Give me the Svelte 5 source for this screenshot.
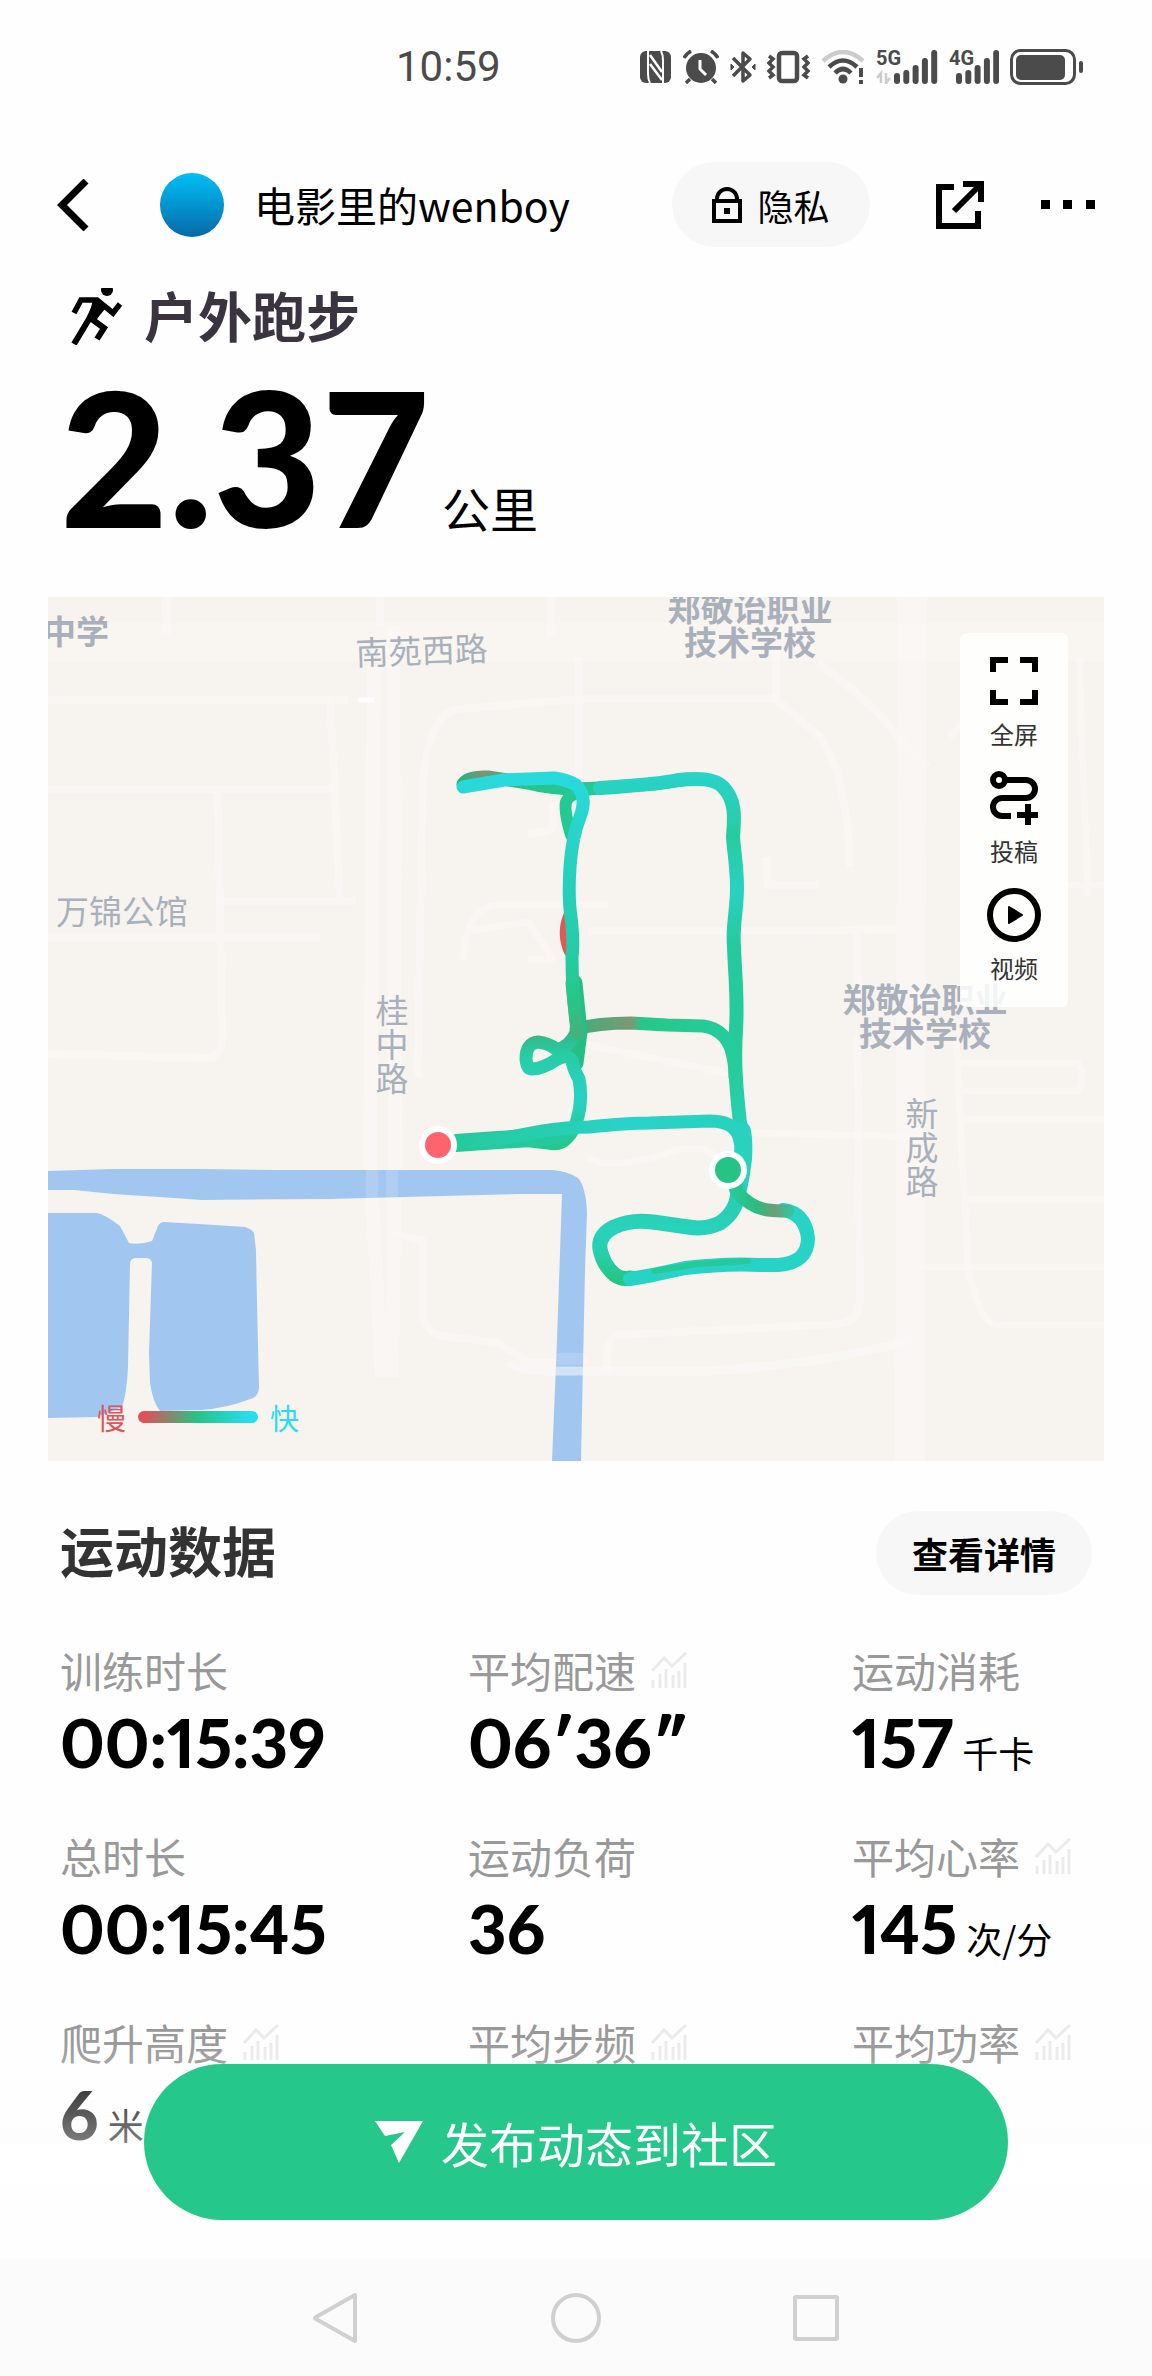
<script>
  const user = { name: '电影里的wenboy' };

  const sport = { title: '户外跑步', distance: '2.37', unit: '公里' };

  const metrics = [
    { label: '训练时长', value: '00:15:39' },
    { label: '平均配速', value: '06′36″', trend: true },
    { label: '运动消耗', value: '157', unit: '千卡' },
    { label: '总时长', value: '00:15:45' },
    { label: '运动负荷', value: '36' },
    { label: '平均心率', value: '145', unit: '次/分', trend: true },
    { label: '爬升高度', value: '6', unit: '米', trend: true },
    { label: '平均步频', trend: true },
    { label: '平均功率', trend: true }
  ];

  // signal bar tops, left to right
  const signalBars = [23, 20, 15, 8, 0];

  const roads = [
    { d: 'M0 103H300M0 192H285M0 340H272M170 192L174 440Q174 460 160 461L0 457', w: 8 },
    { d: 'M282 100L292 304M168 304H308', w: 8 },
    { d: 'M118 0V38M332 0V30M503 0V40', w: 9 },
    { d: 'M326 70L322 560L334 780M345 30L347 560L344 780', w: 14 },
    { d: 'M370 480L374 200Q378 116 410 112L530 102H728L772 140Q800 180 802 270', w: 8 },
    { d: 'M531 60V186M505 205V230Q505 236 480 236', w: 8 },
    { d: 'M415 362Q418 310 450 308L560 308M418 334L480 325L505 362H480', w: 7 },
    { d: 'M728 50V104M770 66Q830 110 850 140L880 170M902 140L960 80', w: 8 },
    { d: 'M718 260L720 288H770M540 334H760L850 332M810 332V400', w: 8 },
    { d: 'M864 0L862 864', w: 30 },
    { d: 'M530 446Q600 460 680 476M540 560Q560 575 620 556Q650 545 670 560M700 536L880 540', w: 7 },
    { d: 'M810 440L812 700Q812 724 790 727L570 738Q556 742 560 775', w: 8 },
    { d: 'M1056 522H910M910 466H1030Q1040 480 1030 494H910M908 440L920 670Q932 728 950 728H1056', w: 7 },
    { d: 'M920 602H1056M870 670H1056M1010 288H1056M1032 60V90L1040 300', w: 7 },
    { d: 'M345 636L375 644V720Q380 738 400 740L450 746L480 765Q500 766 540 764', w: 8 }
  ];

  const route = [
    { d: 'M415 187Q420 179 440 180L480 186Q510 194 552 191L606 187L640 182', stroke: 'url(#legBrown)', w: 13 },
    { d: 'M523 238Q516 214 518 205Q522 194 552 191', stroke: '#24c994', w: 12 },
    { d: 'M520 319Q513 337 521 355', stroke: '#df5a57', w: 10 },
    { d: 'M552 191C576 189 606 188 630 183C650 181 666 181 675 190C689 204 686 224 685 240C686 255 689 270 689 290C689 315 684 330 686 350C687 380 690 400 688 433C686 465 688 490 692 526C695 538 698 548 697 562', stroke: 'url(#legRight)', w: 14 },
    { d: 'M528 432Q550 426 583 426L619 428L655 429Q676 432 683 452Q687 465 687 480', stroke: 'url(#legMid)', w: 13 },
    { d: 'M526 386L531 435L527 466', stroke: '#25bf85', w: 17 },
    { d: 'M528 436Q520 452 508 452Q500 446 490 445Q478 446 478 462Q479 472 484 472Q494 472 508 463Q520 456 524 464Q526 474 531 482Q535 503 529 523Q526 534 519 541Q512 549 500 546L456 541', stroke: 'url(#legLoop)', w: 13 },
    { d: 'M408 546L450 543L498 540L516 536', stroke: '#24ca9c', w: 18 },
    { d: 'M408 545L446 543L495 534Q520 530 541 530Q580 526 601 526L662 524Q690 524 692 545', stroke: 'url(#legLow)', w: 13 },
    { d: 'M415 190L456 183L506 181Q520 183 528 188Q540 200 532 220Q524 240 522 270Q520 300 523 320Q526 345 524 360Q524 400 530 436', stroke: 'url(#legLeft)', w: 13 },
    { d: 'M694 534Q698 556 690 592', stroke: '#28d2bf', w: 18 },
    { d: 'M690 592Q690 614 672 626Q657 633 640 630L605 625Q583 622 566 630Q550 638 552 652Q555 668 567 678Q574 683 582 681', stroke: 'url(#legBase)', w: 15 },
    { d: 'M582 682L605 678L637 671Q680 666 712 668H730Q760 666 760 641Q757 616 735 613', stroke: '#27d3c5', w: 14 },
    { d: 'M606 674L650 667L700 664', stroke: '#25c99a', w: 6 },
    { d: 'M740 614Q722 614 715 612Q702 609 690 596L684 582', stroke: 'url(#legBack)', w: 13 }
  ];

  const places = [
    { x: 28, y: 47, lines: ['中学'], bold: true },
    { x: 374, y: 66, lines: ['南苑西路'], tilt: -2 },
    { x: 702, y: 24, lines: ['郑敬诒职业', '技术学校'], bold: true },
    { x: 877, y: 415, lines: ['郑敬诒职业', '技术学校'], bold: true },
    { x: 74, y: 327, lines: ['万锦公馆'] },
    { x: 344, y: 426, lines: ['桂', '中', '路'] },
    { x: 874, y: 529, lines: ['新', '成', '路'] }
  ];
</script>

<div class="screen">
  <div class="status-bar">
    <span class="clock">10:59</span>
    <div class="status-icons">
      <svg width="32" height="34" viewBox="0 0 32 34">
        <rect y="1" width="31" height="32" rx="6" fill="#4b4b4b" />
        <path d="M8 1V24Q8 29 10 33M23 33V10Q23 5 21 1" fill="none" stroke="#fff" stroke-width="2" />
        <path d="M10 5L22 22M10 14L22 30" stroke="#fff" stroke-width="2.5" />
      </svg>
      <svg width="36" height="34" viewBox="0 0 36 34" fill="none" stroke="#4b4b4b" stroke-width="3.5">
        <circle cx="18" cy="18" r="15" fill="#4b4b4b" stroke="none" />
        <path d="M1 8Q3 4 8 1M35 8Q33 4 28 1M7 29L3 33M29 29L33 33" />
        <path d="M17 10V19L23 25" stroke="#fff" stroke-width="3" />
      </svg>
      <svg width="26" height="34" viewBox="0 0 26 34" fill="none" stroke="#4b4b4b" stroke-width="3.5">
        <path d="M3 8L20 25L13 31V3L20 9L3 26" stroke-linejoin="round" />
        <path d="M1 14L4 17L1 20ZM25 14L22 17L25 20Z" fill="#4b4b4b" stroke-width="1" />
      </svg>
      <svg width="43" height="34" viewBox="0 0 43 34" fill="none" stroke="#4b4b4b" stroke-width="4.5">
        <rect x="12" y="3" width="18" height="28" rx="3" />
        <path d="M2 6L6 9L2 13L6 17L2 21L6 25L2 28M41 6L37 9L41 13L37 17L41 21L37 25L41 28" stroke-width="3.5" />
      </svg>
      <svg width="44" height="34" viewBox="0 0 44 34" fill="none" stroke="#4b4b4b" stroke-width="4.5">
        <path d="M2 11Q22 -7 42 11" stroke="#ccc" />
        <path d="M8 17Q22 4 36 17M14 23Q22 15 30 23" />
        <circle cx="22" cy="29" r="4.5" fill="#4b4b4b" stroke="none" />
        <path d="M40 18V27M40 30V34" stroke-width="4" />
      </svg>
      <div class="signal">
        <span class="network">5G</span>
        <svg width="62" height="34" viewBox="0 0 62 34">
          <path d="M1 28L5 23V33M14 28L10 33V23" fill="none" stroke="#ccc" stroke-width="2.5" />
          {#each signalBars as top, i}
            <rect x={18 + i * 9.3} y={top} width="6" height={34 - top} rx="3" fill="#4b4b4b" />
          {/each}
        </svg>
      </div>
      <div class="signal">
        <span class="network">4G</span>
        <svg width="50" height="34" viewBox="0 0 50 34">
          {#each signalBars as top, i}
            <rect x={7 + i * 9.3} y={top} width="6" height={34 - top} rx="3" fill="#4b4b4b" />
          {/each}
        </svg>
      </div>
      <svg width="74" height="36" viewBox="0 0 74 36">
        <rect x="1.5" y="1.5" width="63" height="33" rx="9" fill="none" stroke="#4b4b4b" stroke-width="3" />
        <rect x="6" y="6" width="49" height="25" rx="5" fill="#4b4b4b" />
        <rect x="69" y="12" width="4" height="12" rx="2" fill="#4b4b4b" />
      </svg>
    </div>
  </div>

  <header class="header">
    <button class="icon-btn back" aria-label="返回">
      <svg width="32" height="52" viewBox="0 0 32 52">
        <path d="M29 2L5 26L29 50" fill="none" stroke="#000" stroke-width="7" />
      </svg>
    </button>
    <span class="avatar"></span>
    <span class="user-name">{user.name}</span>
    <button class="privacy">
      <svg width="30" height="36" viewBox="0 0 30 36" fill="none" stroke="#000" stroke-width="4">
        <path d="M5 13V12A10 10 0 0 1 25 12V13" />
        <rect x="2" y="14" width="26" height="20" />
        <rect x="12" y="21" width="6" height="6" fill="#000" stroke="none" />
      </svg>
      隐私
    </button>
    <button class="icon-btn share" aria-label="分享">
      <svg width="48" height="48" viewBox="0 0 48 48" fill="none" stroke="#000" stroke-width="6">
        <path d="M18 6H3V45H42V30" />
        <path d="M27 3H45V21M44 4L18 30" />
      </svg>
    </button>
    <button class="icon-btn more" aria-label="更多">
      <svg width="54" height="10" viewBox="0 0 54 10">
        <path d="M0 0H9V9H0ZM22 0H31V9H22ZM45 0H54V9H45Z" />
      </svg>
    </button>
  </header>

  <main>
    <section class="summary">
      <h1>
        <svg width="52" height="57" viewBox="0 0 52 57" fill="none" stroke="#000" stroke-width="5.5">
          <circle cx="36" cy="2" r="6" fill="#000" stroke="none" />
          <path d="M3 25L10 12H26L42 25L49 16" />
          <path d="M27 12L18 31L3 56M31 17L22 32L33 40L26 51" stroke-width="6" />
          <path d="M22 12H30L34 21L24 33L17 31Z" fill="#000" stroke="none" />
        </svg>
        {sport.title}
      </h1>
      <p class="distance"><strong>{sport.distance}</strong><span>{sport.unit}</span></p>
    </section>

    <section class="map">
      <svg class="map-canvas" viewBox="0 0 1056 864">
        <defs>
          <linearGradient id="legBrown" gradientUnits="userSpaceOnUse" x1="412" y1="0" x2="640" y2="0">
            <stop offset="0" stop-color="#27b47f" />
            <stop offset="0.1" stop-color="#7b9470" />
            <stop offset="0.3" stop-color="#24c48c" />
            <stop offset="0.6" stop-color="#25c894" />
            <stop offset="1" stop-color="#28d2c4" />
          </linearGradient>
          <linearGradient id="legRight" gradientUnits="userSpaceOnUse" x1="0" y1="180" x2="0" y2="560">
            <stop offset="0" stop-color="#28d3c8" />
            <stop offset="0.15" stop-color="#25cca0" />
            <stop offset="0.3" stop-color="#28d2c0" />
            <stop offset="0.45" stop-color="#24ca9c" />
            <stop offset="0.75" stop-color="#25cb98" />
            <stop offset="1" stop-color="#28d3c5" />
          </linearGradient>
          <linearGradient id="legMid" gradientUnits="userSpaceOnUse" x1="528" y1="0" x2="686" y2="0">
            <stop offset="0" stop-color="#3fae7c" />
            <stop offset="0.35" stop-color="#7a9a72" />
            <stop offset="0.42" stop-color="#25c78a" />
            <stop offset="1" stop-color="#25cd9d" />
          </linearGradient>
          <linearGradient id="legLoop" gradientUnits="userSpaceOnUse" x1="0" y1="436" x2="0" y2="546">
            <stop offset="0" stop-color="#35b682" />
            <stop offset="0.2" stop-color="#27cda6" />
            <stop offset="0.6" stop-color="#28d2c3" />
            <stop offset="1" stop-color="#24c88f" />
          </linearGradient>
          <linearGradient id="legLow" gradientUnits="userSpaceOnUse" x1="408" y1="0" x2="692" y2="0">
            <stop offset="0" stop-color="#24cb9f" />
            <stop offset="0.4" stop-color="#27cfb4" />
            <stop offset="0.6" stop-color="#28d4ca" />
            <stop offset="1" stop-color="#27d1bd" />
          </linearGradient>
          <linearGradient id="legLeft" gradientUnits="userSpaceOnUse" x1="0" y1="180" x2="0" y2="436">
            <stop offset="0" stop-color="#28dadc" />
            <stop offset="0.3" stop-color="#28d2c4" />
            <stop offset="0.65" stop-color="#25ccaa" />
            <stop offset="0.85" stop-color="#24c889" />
            <stop offset="1" stop-color="#42b37c" />
          </linearGradient>
          <linearGradient id="legBase" gradientUnits="userSpaceOnUse" x1="0" y1="590" x2="0" y2="682">
            <stop offset="0" stop-color="#26ceaa" />
            <stop offset="0.45" stop-color="#28d2bb" />
            <stop offset="0.7" stop-color="#27cfb0" />
            <stop offset="1" stop-color="#24c785" />
          </linearGradient>
          <linearGradient id="legBack" gradientUnits="userSpaceOnUse" x1="684" y1="0" x2="748" y2="0">
            <stop offset="0" stop-color="#25cb9a" />
            <stop offset="0.4" stop-color="#2dbb80" />
            <stop offset="0.65" stop-color="#6b9e74" />
            <stop offset="1" stop-color="#27cdab" />
          </linearGradient>
        </defs>

        <rect width="1056" height="864" fill="#f7f4ef" />
        <rect y="26" width="1056" height="38" fill="#f9f6f2" />

        <g fill="none" stroke="#faf7f4" stroke-opacity="0.75" stroke-linejoin="round">
          {#each roads as road}
            <path d={road.d} stroke-width={road.w} />
          {/each}
        </g>
        <path d="M310 103H326" stroke="#fff" stroke-width="5" />

        <g fill="#a1c7f0">
          <path d="M0 574L65 572H153L230 573L505 573Q519 574 530 581Q538 590 539 616L537 673L533 864H504L509 743L514 597H474L281 602L154 603L126 601L65 597L26 593H0Z" />
          <path d="M0 616H49Q58 618 72 629L81 646Q92 648 104 644L110 629Q112 625 116 625L167 628L197 630Q204 632 206 636L208 653L209 706L211 790Q211 798 205 801Q180 811 153 813L112 814Q105 806 102 786L101 756L104 665Q102 661 98 661H87Q82 662 82 667L80 770Q79 795 74 810L49 820L0 821Z" />
        </g>
        <path d="M324 573V602M344 573V602M508 762H536" fill="none" stroke="#fcf9f9" stroke-opacity="0.15" stroke-width="12" />
        <path d="M462 765Q470 774 500 774H660Q770 768 865 743" fill="none" stroke="#fcf9f9" stroke-opacity="0.55" stroke-width="9" />

        <g class="places">
          {#each places as place}
            <text class:bold={place.bold} y={place.y} transform={place.tilt ? `rotate(${place.tilt} ${place.x} ${place.y})` : null}>
              {#each place.lines as line, i}
                <tspan x={place.x} dy={i ? 34 : 0}>{line}</tspan>
              {/each}
            </text>
          {/each}
        </g>

        <g fill="none" stroke-linecap="round" stroke-linejoin="round">
          {#each route as leg}
            <path d={leg.d} stroke={leg.stroke} stroke-width={leg.w} />
          {/each}
        </g>

        <circle cx="390" cy="548" r="19" fill="#fff" />
        <circle cx="390" cy="548" r="13" fill="#ff636e" />
        <circle cx="680" cy="573" r="19" fill="#fff" />
        <circle cx="680" cy="573" r="13" fill="#25c486" />
      </svg>

      <div class="map-tools">
        <button>
          <svg width="54" height="54" viewBox="0 0 54 54" fill="none" stroke="#000" stroke-width="6">
            <path d="M6 18V6H21M33 6H48V18M6 36V48H21M33 48H48V36" />
          </svg>
          全屏
        </button>
        <button>
          <svg width="54" height="54" viewBox="0 0 54 54" fill="none" stroke="#000" stroke-width="6">
            <circle cx="12" cy="9" r="6" />
            <path d="M18 9H39A9 9 0 0 1 39 27H15A9 9 0 0 0 15 45H24" />
            <path d="M30 44H51M41 33V54" />
          </svg>
          投稿
        </button>
        <button>
          <svg width="54" height="54" viewBox="0 0 54 54">
            <circle cx="27" cy="27" r="24" fill="none" stroke="#000" stroke-width="6" />
            <path d="M22 19L35 27L22 35Z" stroke="#000" stroke-width="2" stroke-linejoin="round" />
          </svg>
          视频
        </button>
      </div>

      <div class="legend">
        <span class="slow">慢</span>
        <span class="scale"></span>
        <span class="fast">快</span>
      </div>
    </section>

    <section class="data">
      <div class="data-head">
        <h2>运动数据</h2>
        <button class="detail">查看详情</button>
      </div>
      <dl class="metrics">
        {#each metrics as metric}
          <div class="metric">
            <dt>
              {metric.label}
              {#if metric.trend}
                <svg width="36" height="36" viewBox="0 0 36 36" fill="none" stroke="#ebebeb" stroke-width="3">
                  <path d="M1 19L13 6L21 14L35 1" />
                  <path d="M2 28V36M9 22V36M15 17V36M22 23V36M28 19V36M34 11V36" />
                </svg>
              {/if}
            </dt>
            <dd>
              {#if metric.value}<strong>{metric.value}</strong>{/if}
              {#if metric.unit}<span>{metric.unit}</span>{/if}
            </dd>
          </div>
        {/each}
      </dl>
    </section>
  </main>

  <footer class="bottom">
    <div class="publish-area">
      <button class="publish">
        <svg width="48" height="44" viewBox="0 0 48 44">
          <path d="M0 1H48L24 43L16 25L30 12L10 16Z" fill="#fff" />
        </svg>
        发布动态到社区
      </button>
    </div>
    <nav class="system-nav">
      <button class="icon-btn" aria-label="后退">
        <svg width="50" height="52" viewBox="0 0 50 52" fill="none" stroke="#d0d0d0" stroke-width="4" stroke-linejoin="round">
          <path d="M44 3V49L5 27Q3 26 5 25Z" />
        </svg>
      </button>
      <button class="icon-btn" aria-label="主页">
        <svg width="50" height="52" viewBox="0 0 50 52" fill="none" stroke="#d0d0d0" stroke-width="4">
          <circle cx="25" cy="26" r="23" />
        </svg>
      </button>
      <button class="icon-btn" aria-label="最近任务">
        <svg width="50" height="52" viewBox="0 0 50 52" fill="none" stroke="#d0d0d0" stroke-width="4">
          <rect x="4" y="5" width="42" height="42" rx="1" />
        </svg>
      </button>
    </nav>
  </footer>
</div>

<style>
  :global(body) {
    background: #fefefe;
  }

  .screen {
    font-family: 'Noto Sans CJK SC', sans-serif;
    color: #000;
  }

  svg {
    display: block;
    flex: none;
  }

  button {
    padding: 0;
    border: 0;
    background: none;
    font: inherit;
    color: inherit;
    cursor: pointer;
  }

  h1,
  h2,
  p,
  dl,
  dd {
    margin: 0;
  }

  .status-bar {
    display: flex;
    align-items: center;
    justify-content: space-between;
    height: 134px;
    padding: 0 68px 0 396px;
  }

  .clock {
    font-family: Roboto, sans-serif;
    font-size: 42px;
    line-height: 48px;
    color: #4b4b4b;
  }

  .status-icons {
    display: flex;
    align-items: center;
    gap: 11px;
  }

  .signal {
    position: relative;
  }

  .network {
    position: absolute;
    top: -3px;
    left: 0;
    font-family: Roboto, sans-serif;
    font-size: 20px;
    font-weight: 700;
    line-height: 22px;
    color: #4b4b4b;
  }

  .header {
    display: flex;
    align-items: center;
    height: 85px;
    padding: 28px 57px 41px;
  }

  .avatar {
    width: 64px;
    height: 64px;
    margin-left: 71px;
    border-radius: 50%;
    background: linear-gradient(#00c0f5, #0569a8);
  }

  .user-name {
    flex: 1;
    margin-left: 30px;
    padding-bottom: 2px;
    font-size: 41px;
    line-height: 60px;
  }

  .privacy {
    display: flex;
    align-items: center;
    justify-content: center;
    gap: 15px;
    width: 198px;
    height: 85px;
    border-radius: 43px;
    background: #f7f7f7;
    font-size: 36px;
  }

  .share {
    margin-left: 66px;
  }

  .more {
    margin-left: 57px;
  }

  .summary {
    padding: 0 60px;
  }

  h1 {
    display: flex;
    align-items: flex-start;
    gap: 21px;
    padding-left: 11px;
    font-size: 54px;
    font-weight: 700;
    line-height: 54px;
    color: #3a3340;
  }

  .distance {
    display: flex;
    align-items: baseline;
    gap: 12px;
    height: 252px;
    line-height: 222px;
  }

  .distance strong {
    font-family: Lato, sans-serif;
    font-size: 187px;
    font-weight: 900;
  }

  .distance span {
    font-size: 48px;
  }

  .map {
    position: relative;
    margin: 0 48px;
  }

  .map-canvas {
    width: 100%;
    height: auto;
  }

  .places text {
    font-size: 33px;
    fill: #a9b0bb;
    text-anchor: middle;
  }

  .places .bold {
    font-weight: 700;
  }

  .map-tools {
    position: absolute;
    top: 36px;
    right: 36px;
    display: flex;
    flex-direction: column;
    gap: 19px;
    padding: 21px 27px;
    border-radius: 6px;
    background: rgba(255, 255, 255, 0.85);
  }

  .map-tools button {
    display: flex;
    flex-direction: column;
    align-items: center;
    gap: 8px;
    font-size: 24px;
    line-height: 36px;
    color: #333;
  }

  .legend {
    position: absolute;
    bottom: 24px;
    left: 49px;
    display: flex;
    align-items: center;
    gap: 12px;
    font-size: 29px;
    line-height: 40px;
  }

  .slow {
    color: #e0535a;
  }

  .fast {
    color: #2bdcf0;
  }

  .scale {
    width: 120px;
    height: 12px;
    border-radius: 6px;
    background: linear-gradient(90deg, #e05055 5%, #25c486 50%, #28dcf0 92%);
  }

  .data {
    padding: 50px 60px 0;
  }

  .data-head {
    display: flex;
    align-items: center;
    justify-content: space-between;
    height: 84px;
  }

  h2 {
    padding-bottom: 6px;
    font-size: 54px;
    font-weight: 700;
    line-height: 78px;
    color: #333;
  }

  .detail {
    width: 216px;
    height: 84px;
    border-radius: 42px;
    background: #f7f7f7;
    font-size: 36px;
    font-weight: 700;
    line-height: 80px;
  }

  .metrics {
    display: grid;
    grid-template-columns: 17fr 16fr 10fr;
    row-gap: 46px;
    margin-top: 45px;
  }

  .metric {
    white-space: nowrap;
  }

  dt {
    display: flex;
    align-items: center;
    gap: 15px;
    font-size: 42px;
    line-height: 60px;
    color: #999;
  }

  dd {
    display: flex;
    align-items: baseline;
    gap: 9px;
    height: 80px;
    line-height: 84px;
  }

  dd strong {
    font-family: Lato, 'Noto Sans CJK SC', sans-serif;
    font-size: 67px;
    font-weight: 900;
    font-variant-numeric: proportional-nums;
  }

  dd span {
    font-size: 36px;
  }

  .bottom {
    position: fixed;
    right: 0;
    bottom: 0;
    left: 0;
  }

  .publish-area {
    padding: 24px 144px 39px;
    background: linear-gradient(rgba(254, 254, 254, 0), #fefefe 210px);
  }

  .publish {
    display: flex;
    align-items: center;
    justify-content: center;
    gap: 18px;
    width: 100%;
    height: 156px;
    border-radius: 78px;
    background: #25c78a;
    font-size: 48px;
    color: #fff;
  }

  .system-nav {
    display: flex;
    align-items: center;
    justify-content: center;
    gap: 190px;
    height: 117px;
    background: #fbfbfb;
  }
</style>
